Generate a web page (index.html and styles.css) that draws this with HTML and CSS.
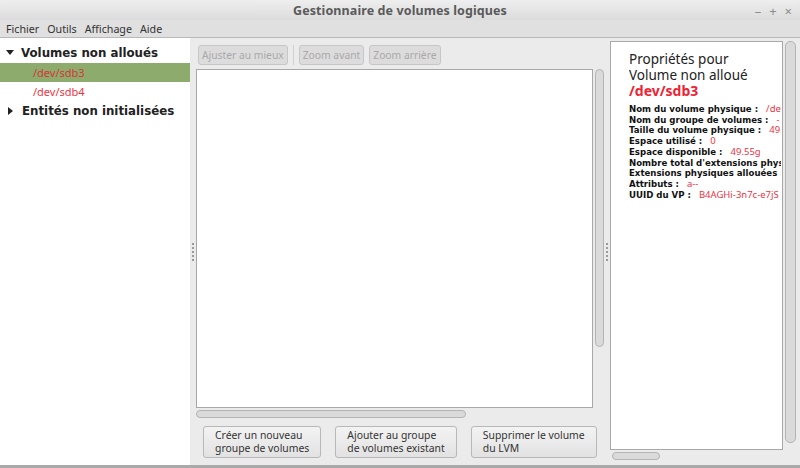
FILE: index.html
```html
<!DOCTYPE html>
<html lang="fr">
<head>
    <meta charset="UTF-8">
    <title>Gestionnaire de volumes logiques</title>
    <link rel="stylesheet" href="styles.css">
</head>
<body>
    <div class="window">
        <div class="titlebar">
            <span class="title">Gestionnaire de volumes logiques</span>
            <div class="controls">
                <span>&#8211;</span>
                <span>+</span>
                <span>&#215;</span>
            </div>
        </div>
        <div class="menubar">
            <a>Fichier</a>
            <a>Outils</a>
            <a>Affichage</a>
            <a>Aide</a>
        </div>

        <div class="main">
            <div class="tree">
                <div class="tree-row group"><span class="arrow down"></span>Volumes non alloués</div>
                <div class="tree-row item selected">/dev/sdb3</div>
                <div class="tree-row item">/dev/sdb4</div>
                <div class="tree-row group"><span class="arrow right"></span>Entités non initialisées</div>
            </div>

            <div class="handle"><span></span><span></span><span></span><span></span><span></span></div>

            <div class="center">
                <div class="toolbar">
                    <button class="tb-btn" disabled>Ajuster au mieux</button>
                    <span class="tb-sep"></span>
                    <button class="tb-btn" disabled>Zoom avant</button>
                    <button class="tb-btn" disabled>Zoom arrière</button>
                </div>
                <div class="canvas-wrap">
                    <div class="canvas"></div>
                    <div class="vscroll"><div class="thumb"></div></div>
                </div>
                <div class="hscroll"><div class="thumb"></div></div>
                <div class="actions">
                    <button class="act-btn">Créer un nouveau<br>groupe de volumes</button>
                    <button class="act-btn">Ajouter au groupe<br>de volumes existant</button>
                    <button class="act-btn">Supprimer le volume<br>du LVM</button>
                </div>
            </div>

            <div class="handle"><span></span><span></span><span></span><span></span><span></span></div>

            <div class="props-pane">
                <div class="props-wrap">
                    <div class="props">
                        <div class="props-clip">
                            <div class="props-title">Propriétés pour<br>Volume non alloué</div>
                            <div class="props-name">/dev/sdb3</div>
                            <ul class="props-list">
                                <li>Nom du volume physique : <span>/dev/sdb3</span></li>
                                <li>Nom du groupe de volumes : <span>-</span></li>
                                <li>Taille du volume physique : <span>49.55g</span></li>
                                <li>Espace utilisé : <span>0</span></li>
                                <li>Espace disponible : <span>49.55g</span></li>
                                <li>Nombre total d'extensions physiques : <span>12684</span></li>
                                <li>Extensions physiques allouées : <span>0</span></li>
                                <li>Attributs : <span>a--</span></li>
                                <li>UUID du VP : <span>B4AGHi-3n7c-e7jS</span></li>
                            </ul>
                        </div>
                    </div>
                    <div class="vscroll tall"><div class="thumb"></div></div>
                </div>
                <div class="hscroll small"><div class="thumb"></div></div>
            </div>
        </div>
    </div>
</body>
</html>
```

FILE: styles.css
```css
body {
    margin: 0;
    padding: 0;
    background-color: #ebebeb;
    font-family: "Noto Sans", "Open Sans", sans-serif;
    color: #333;
}

.window {
    width: 800px;
    height: 468px;
    display: flex;
    flex-direction: column;
    background-color: #ebebeb;
    border-bottom: 3px solid #a9a9a9;
    box-sizing: border-box;
    overflow: hidden;
}

/* barre de titre */
.titlebar {
    height: 20px;
    position: relative;
    display: flex;
    align-items: center;
    justify-content: center;
    background: linear-gradient(#eeeeee, #dcdcdc);
    border-radius: 4px 4px 0 0;
}

.title {
    font-size: 12.5px;
    font-weight: bold;
    color: #5a5a5a;
    letter-spacing: 0.1px;
}

.controls {
    position: absolute;
    right: 8px;
    top: 2px;
    display: flex;
    gap: 8px;
    font-size: 13px;
    color: #8c8c8c;
}

.menubar {
    height: 17px;
    display: flex;
    align-items: center;
    gap: 8px;
    padding-left: 6px;
    font-size: 10.7px;
    color: #333;
    background-color: #e0e0e0;
    border-bottom: 1px solid #b9b9b9;
}

.main {
    flex: 1;
    display: flex;
    min-height: 0;
}

/* arbre de gauche */
.tree {
    width: 190px;
    background-color: #fff;
    padding-top: 5px;
    font-family: "DejaVu Sans", sans-serif;
}

.tree-row {
    height: 19.5px;
    display: flex;
    align-items: center;
    box-sizing: border-box;
    white-space: nowrap;
}

.tree-row.group {
    font-weight: bold;
    font-size: 11.8px;
    color: #222;
    padding-left: 6px;
}

.tree-row.item {
    font-family: "Noto Sans", sans-serif;
    font-size: 11px;
    color: #ee3344;
    padding-left: 33px;
}

.tree-row.selected {
    background-color: #8dab6c;
    color: #d8343c;
}

.arrow {
    width: 0;
    height: 0;
    margin-right: 7px;
    border-style: solid;
}

.arrow.down {
    border-width: 5px 4px 0 4px;
    border-color: #222 transparent transparent transparent;
}

.arrow.right {
    border-width: 4px 0 4px 5px;
    border-color: transparent transparent transparent #222;
    margin-left: 2px;
    margin-right: 9px;
}

/* poignées des panneaux */
.handle {
    width: 6px;
    display: flex;
    flex-direction: column;
    align-items: center;
    justify-content: center;
    gap: 2px;
}

.handle span {
    width: 2px;
    height: 2px;
    background-color: #9a9a9a;
}

/* partie centrale */
.center {
    width: 408px;
    display: flex;
    flex-direction: column;
}

.toolbar {
    height: 20px;
    display: flex;
    align-items: center;
    gap: 5px;
    padding: 7px 0 4px 2px;
}

.tb-btn {
    height: 20px;
    padding: 0 3px;
    font-family: "Noto Sans", sans-serif;
    font-size: 10.3px;
    color: #a9a9a9;
    background-color: #dcdcdc;
    border: 1px solid #c6c6c6;
    border-radius: 3px;
}

.tb-sep {
    width: 1px;
    height: 20px;
    background-color: #d2d2d2;
}

.canvas-wrap {
    height: 339px;
    display: flex;
    gap: 2px;
}

.canvas {
    flex: 1;
    background-color: #fff;
    border: 1px solid #a8a8a8;
}

.vscroll {
    width: 9px;
    height: 278px;
}

.thumb {
    width: 100%;
    height: 100%;
    box-sizing: border-box;
    background-color: #dadada;
    border: 1px solid #b4b4b4;
    border-radius: 5px;
}

.hscroll {
    width: 270px;
    height: 8px;
    margin-top: 2px;
}

.actions {
    display: flex;
    gap: 14px;
    padding: 8px 0 0 7px;
}

.act-btn {
    height: 32px;
    padding: 0 11px;
    text-align: left;
    white-space: nowrap;
    font-family: "Noto Sans", sans-serif;
    font-size: 10.4px;
    line-height: 13px;
    color: #333;
    background: linear-gradient(#f3f3f3, #e2e2e2);
    border: 1px solid #b8b8b8;
    border-radius: 3px;
}

/* panneau des propriétés */
.props-pane {
    flex: 1;
    display: flex;
    flex-direction: column;
    padding-top: 3px;
}

.props-wrap {
    display: flex;
    gap: 2px;
    height: 409px;
}

.props {
    width: 173px;
    box-sizing: border-box;
    background-color: #fff;
    border: 1px solid #a8a8a8;
    padding: 10px 1px 0 18px;
}

.props-clip {
    overflow: hidden;
}

.props-title {
    font-size: 13.5px;
    line-height: 15.5px;
    color: #222;
}

.props-name {
    font-size: 14px;
    font-weight: bold;
    color: #ee2233;
    line-height: 16px;
    margin-bottom: 5px;
}

.props-list {
    list-style: none;
    margin: 0;
    padding: 0;
    font-family: "DejaVu Sans", sans-serif;
    font-size: 8.6px;
    line-height: 10.7px;
    font-weight: bold;
    color: #111;
    white-space: nowrap;
}

.props-list span {
    font-family: "Noto Sans", sans-serif;
    font-weight: normal;
    font-size: 9.5px;
    color: #ee3344;
    margin-left: 5px;
}

.vscroll.tall {
    width: 11px;
    height: 402px;
}

.hscroll.small {
    width: 48px;
    margin: 2px 0 0 2px;
}
```
